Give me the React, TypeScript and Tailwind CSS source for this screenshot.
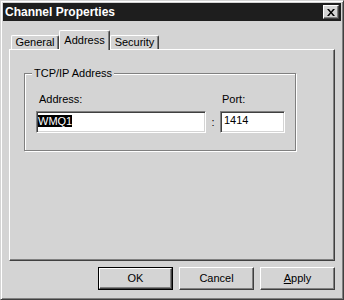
const raised = "border border-t-white border-l-white border-r-[#404040] border-b-[#404040] shadow-[inset_-1px_-1px_0_#808080]";
const sunken = "border border-t-[#808080] border-l-[#808080] border-r-white border-b-white shadow-[inset_1px_1px_0_#404040,inset_-1px_-1px_0_#d4d4d4]";

function Tab({ label, width, active }: { label: string; width: string; active?: boolean }) {
  if (active) {
    return (
      <div
        className={`relative z-10 -mb-px flex h-[20px] justify-center bg-[#d4d4d4] pt-[1px] rounded-t-[2px] border-t border-l border-r border-t-white border-l-white border-r-[#404040] shadow-[inset_-1px_0_0_#808080] ${width}`}
      >
        {label}
      </div>
    );
  }
  return (
    <div
      className={`flex h-[14px] justify-center rounded-t-[2px] border-t border-l border-r border-t-white border-l-white border-r-[#404040] shadow-[inset_-1px_0_0_#808080] leading-[12px] ${width}`}
    >
      {label}
    </div>
  );
}

function Button({ children, isDefault }: { children: React.ReactNode; isDefault?: boolean }) {
  if (isDefault) {
    return (
      <div className="h-[23px] w-[75px] border border-black">
        <div className={`flex h-full w-full items-center justify-center ${raised}`}>{children}</div>
      </div>
    );
  }
  return <div className={`flex h-[23px] w-[75px] items-center justify-center ${raised}`}>{children}</div>;
}

export default function App() {
  return (
    <div
      className="flex h-[300px] w-[344px] flex-col border border-t-[#d4d4d4] border-l-[#d4d4d4] border-r-[#404040] border-b-[#404040] bg-[#d4d4d4] p-[2px] text-[11px] text-black shadow-[inset_1px_1px_0_#fff,inset_-1px_-1px_0_#808080]"
      style={{ fontFamily: '"Liberation Sans", Arial, sans-serif' }}
    >
      {/* title bar */}
      <div className="flex h-[18px] items-center justify-between bg-[#1e1e1e] pl-[2px] pr-[2px]">
        <span className="text-[12px] font-bold leading-[14px] text-white">Channel Properties</span>
        <div className={`flex h-[14px] w-[16px] items-center justify-center bg-[#d4d4d4] ${raised}`}>
          <svg width="8" height="7" viewBox="0 0 8 7">
            <path d="M0 0h2l2 2.5L6 0h2L5 3.5 8 7H6L4 4.5 2 7H0l3-3.5z" fill="#000" />
          </svg>
        </div>
      </div>

      <div className="flex flex-1 flex-col px-[6px] pt-[9px]">
        {/* tabs */}
        <div className="flex h-[19px] items-end pl-[2px]">
          <Tab label="General" width="w-[48px]" />
          <Tab label="Address" width="w-[51px]" active />
          <Tab label="Security" width="w-[49px]" />
        </div>

        {/* tab panel */}
        <div className="h-[212px] w-[326px] border border-t-white border-l-white border-r-[#404040] border-b-[#404040] pl-[14px] pt-[23px] shadow-[inset_-1px_-1px_0_#808080]">
          <div className="relative h-[78px] w-[272px] border border-[#808080] pl-[11px] pt-[19px] shadow-[1px_1px_0_#fff,inset_1px_1px_0_#fff]">
            <span className="absolute left-[7px] top-[-7px] bg-[#d4d4d4] px-[2px] leading-[13px]">TCP/IP Address</span>
            <div className="flex items-end">
              <div className="flex flex-col">
                <span className="pl-[3px] leading-[13px]">Address:</span>
                <div className={`mt-[5px] h-[22px] w-[170px] bg-white pl-px pt-[1px] ${sunken}`}>
                  <span className="bg-black leading-[14px] text-white">WMQ1</span>
                </div>
              </div>
              <div className="flex h-[22px] w-[14px] items-center justify-center">:</div>
              <div className="flex flex-col">
                <span className="pl-[2px] leading-[13px]">Port:</span>
                <div className={`mt-[5px] h-[22px] w-[65px] bg-white pl-[3px] pt-[1px] leading-[14px] ${sunken}`}>
                  1414
                </div>
              </div>
            </div>
          </div>
        </div>

        {/* buttons */}
        <div className="mt-[6px] flex justify-end gap-[6px] pr-[-1px]">
          <Button isDefault>OK</Button>
          <Button>Cancel</Button>
          <Button>
            <span>
              <span className="underline">A</span>pply
            </span>
          </Button>
        </div>
      </div>
    </div>
  );
}
